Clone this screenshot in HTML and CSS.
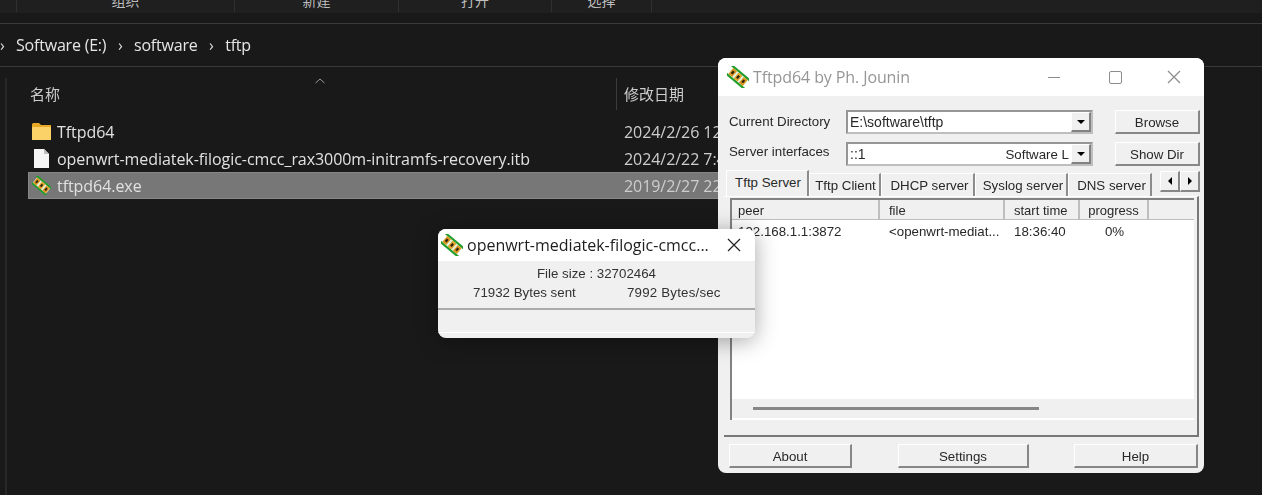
FILE: index.html
```html
<!DOCTYPE html>
<html>
    <head>
        <title>Tftpd64</title>

        <link rel="stylesheet" href="styles.css">
    </head>

    <body>
        <svg class="icon-defs" width="0" height="0">
            <symbol id="chip" viewBox="0 0 20 20">
                <g transform="rotate(40 10 10)">
                    <rect x="-2" y="4.5" width="24" height="2" fill="#1f9e2c"></rect>
                    <rect x="-2" y="13.5" width="24" height="2" fill="#1f9e2c"></rect>
                    <rect x="1" y="6.5" width="18" height="7" fill="#e6f3e0"></rect>
                    <rect x="1.5" y="6.5" width="4.5" height="7" fill="#d9951f"></rect>
                    <rect x="7.8" y="6.5" width="4.5" height="7" fill="#e0a32c"></rect>
                    <rect x="14" y="6.5" width="4.5" height="7" fill="#d9951f"></rect>
                    <rect x="2.7" y="8.5" width="2" height="3" fill="#2a2210"></rect>
                    <rect x="9" y="8.5" width="2" height="3" fill="#2a2210"></rect>
                    <rect x="15.2" y="8.5" width="2" height="3" fill="#2a2210"></rect>
                </g>
            </symbol>
        </svg>

        <div class="explorer">
            <div class="toolbar">
                <span class="tool tool-first">组织</span>
                <span class="tool tool-new">新建</span>
                <span class="tool tool-open">打开</span>
                <span class="tool tool-select">选择</span>
            </div>

            <div class="address-bar">
                <span class="crumb-sep first-sep">›</span>
                <span>Software (E:)</span>
                <span class="crumb-sep">›</span>
                <span>software</span>
                <span class="crumb-sep">›</span>
                <span>tftp</span>
            </div>

            <div class="file-area">
                <div class="column-head">
                    <span class="col-name">名称</span>
                    <svg class="sort-arrow" width="10" height="6" viewBox="0 0 10 6">
                        <path d="M0.5 5 L5 1 L9.5 5" fill="none" stroke="#9a9a9a" stroke-width="1"></path>
                    </svg>
                    <span class="col-date">修改日期</span>
                </div>

                <div class="file-row">
                    <svg class="file-icon" width="19" height="17" viewBox="0 0 19 17">
                        <path d="M0 1.5 Q0 0 1.5 0 H7 L9 2 H19 V17 H0 Z" fill="#e8a926"></path>
                        <rect x="0" y="4" width="19" height="13" rx="1" fill="#fbd268"></rect>
                    </svg>
                    <span class="file-name">Tftpd64</span>
                    <span class="file-date">2024/2/26 12:10</span>
                </div>
                <div class="file-row">
                    <svg class="file-icon" width="19" height="19" viewBox="0 0 19 19">
                        <path d="M2 0 H12 L17 5 V19 H2 Z" fill="#f5f5f5"></path>
                        <path d="M12 0 V5 H17 Z" fill="#bdbdbd"></path>
                    </svg>
                    <span class="file-name">openwrt-mediatek-filogic-cmcc_rax3000m-initramfs-recovery.itb</span>
                    <span class="file-date">2024/2/22 7:48</span>
                </div>
                <div class="file-row selected">
                    <svg class="file-icon" width="19" height="19"><use href="#chip"></use></svg>
                    <span class="file-name">tftpd64.exe</span>
                    <span class="file-date">2019/2/27 22:08</span>
                </div>
            </div>
        </div>

        <div class="tftp-window">
            <div class="title-bar">
                <svg class="title-icon" width="22" height="22"><use href="#chip"></use></svg>
                <span class="title-text">Tftpd64 by Ph. Jounin</span>
                <div class="win-controls">
                    <span class="ctl-min"></span>
                    <span class="ctl-max"></span>
                    <svg width="14" height="14" viewBox="0 0 14 14">
                        <path d="M1 1 L13 13 M13 1 L1 13" stroke="#8c8c8c" stroke-width="1.2"></path>
                    </svg>
                </div>
            </div>

            <div class="tftp-body">
                <div class="form-row">
                    <label class="form-label">Current Directory</label>
                    <div class="combo">
                        <span class="combo-text">E:\software\tftp</span>
                        <span class="combo-btn"><i class="arrow-down"></i></span>
                    </div>
                    <button class="bevel-button side-button">Browse</button>
                </div>
                <div class="form-row form-row-2">
                    <label class="form-label label-2">Server interfaces</label>
                    <div class="combo">
                        <span class="combo-text">::1</span>
                        <span class="combo-right">Software L</span>
                        <span class="combo-btn"><i class="arrow-down"></i></span>
                    </div>
                    <button class="bevel-button side-button">Show Dir</button>
                </div>

                <div class="tabs">
                    <span class="tab tab-active">Tftp Server</span>
                    <span class="tab tab-client">Tftp Client</span>
                    <span class="tab tab-dhcp">DHCP server</span>
                    <span class="tab tab-syslog">Syslog server</span>
                    <span class="tab tab-dns">DNS server</span>
                    <div class="tab-scroll">
                        <span class="tab-arrow"><i class="arrow-left"></i></span>
                        <span class="tab-arrow"><i class="arrow-right"></i></span>
                    </div>
                </div>

                <div class="tab-panel">
                    <div class="list">
                        <div class="list-head">
                            <span class="head-cell cell-peer">peer</span>
                            <span class="head-cell cell-file">file</span>
                            <span class="head-cell cell-start">start time</span>
                            <span class="head-cell cell-progress">progress</span>
                            <span class="head-cell head-rest"></span>
                        </div>
                        <div class="list-row">
                            <span class="cell-peer">192.168.1.1:3872</span>
                            <span class="cell-file">&lt;openwrt-mediat...</span>
                            <span class="cell-start">18:36:40</span>
                            <span class="cell-progress">0%</span>
                        </div>
                        <div class="list-scroll"><span class="scroll-thumb"></span></div>
                    </div>
                </div>

                <div class="bottom-buttons">
                    <button class="bevel-button about-button">About</button>
                    <button class="bevel-button settings-button">Settings</button>
                    <button class="bevel-button help-button">Help</button>
                </div>
            </div>
        </div>

        <div class="progress-dialog">
            <div class="dialog-title">
                <svg class="dialog-icon" width="22" height="22"><use href="#chip"></use></svg>
                <span class="dialog-name">openwrt-mediatek-filogic-cmcc...</span>
                <svg class="dialog-close" width="14" height="14" viewBox="0 0 14 14">
                    <path d="M1 1 L13 13 M13 1 L1 13" stroke="#222" stroke-width="1.2"></path>
                </svg>
            </div>
            <div class="dialog-info">
                <p class="size-line">File size : 32702464</p>
                <p class="rate-line"><span>71932 Bytes sent</span><span class="rate-speed">7992 Bytes/sec</span></p>
            </div>
            <div class="dialog-bar"></div>
        </div>
    </body>
</html>
```

FILE: styles.css
```css
html, body{
    margin:0;
    padding:0;
}
body{
    width:1262px;
    height:495px;
    overflow:hidden;
    background-color:rgb(25, 25, 25);
    position:relative;
}
.icon-defs{
    position:absolute;
}

/* explorer behind the windows */
.explorer{
    height:495px;
    display:flex;
    flex-direction:column;
    color:rgb(225, 225, 225);
    font-family:"Open Sans", "Noto Sans CJK SC", sans-serif;
    filter:blur(0.4px);
}
.toolbar{
    height:24px;
    box-sizing:border-box;
    border-bottom:1px solid rgb(58, 58, 58);
    display:flex;
    overflow:hidden;
    font-size:14px;
    color:rgb(190, 190, 190);
    background:linear-gradient(rgb(31, 31, 31) 13px, rgb(25, 25, 25) 13px);
}
.tool{
    height:12px;
    box-sizing:border-box;
    border-left:1px solid rgb(48, 48, 48);
    display:block;
    text-align:center;
    line-height:0;
    font-family:"Noto Sans CJK SC", sans-serif;
}
.tool-first{
    margin-left:16px;
    width:218px;
}
.tool-new{
    width:164px;
}
.tool-open{
    width:153px;
}
.tool-select{
    width:101px;
    border-right:1px solid rgb(48, 48, 48);
}
.address-bar{
    height:43px;
    box-sizing:border-box;
    border-bottom:1px solid rgb(58, 58, 58);
    display:flex;
    align-items:center;
    padding-left:16px;
    font-size:16px;
    letter-spacing:-0.2px;
    color:rgb(230, 230, 230);
}
.crumb-sep{
    margin:0 11.5px;
    color:rgb(220, 220, 220);
}
.first-sep{
    margin:0 8px 0 -16px;
    width:8px;
}
.file-area{
    flex:1;
    margin-left:5px;
    border-left:2px solid rgb(40, 40, 40);
    margin-top:11px;
}
.column-head{
    height:32px;
    position:relative;
    font-family:"Noto Sans CJK SC", sans-serif;
    font-size:15px;
    line-height:32px;
    color:rgb(205, 205, 205);
    margin-bottom:8px;
}
.col-name{
    position:absolute;
    left:23px;
}
.sort-arrow{
    position:absolute;
    left:308px;
    top:0;
}
.col-date{
    position:absolute;
    left:609px;
    padding-left:7px;
    border-left:1px solid rgb(60, 60, 60);
}
.file-row{
    height:27px;
    margin-left:21px;
    display:flex;
    align-items:center;
    font-size:16px;
    letter-spacing:-0.06px;
}
.file-icon{
    margin-left:4px;
    width:19px;
    flex:none;
}
.file-name{
    margin-left:6px;
    width:567px;
    flex:none;
    white-space:nowrap;
}
.file-date{
    color:rgb(205, 205, 205);
    white-space:nowrap;
    width:94px;
    overflow:hidden;
}
.selected{
    background-color:rgb(119, 119, 119);
    border:1px solid rgb(135, 135, 135);
    box-sizing:border-box;
    margin-right:500px;
}
.selected .file-icon{
    margin-left:3px;
}

/* tftpd64 main window */
.tftp-window{
    position:absolute;
    left:718px;
    top:58px;
    width:486px;
    height:415px;
    border-radius:8px;
    overflow:hidden;
    background-color:rgb(240, 240, 240);
    font-family:"Liberation Sans", sans-serif;
    font-size:13.3px;
    color:rgb(40, 40, 40);
    filter:blur(0.4px);
}
.title-bar{
    height:38px;
    background-color:white;
    display:flex;
    align-items:center;
    padding-left:9px;
}
.title-text{
    margin-left:4px;
    font-family:"Open Sans", sans-serif;
    font-size:16px;
    letter-spacing:-0.1px;
    color:rgb(150, 150, 150);
    flex:1;
}
.win-controls{
    display:flex;
    align-items:center;
}
.ctl-min{
    width:12px;
    height:1px;
    background-color:rgb(140, 140, 140);
    margin-right:49px;
}
.ctl-max{
    width:11px;
    height:11px;
    border:1px solid rgb(140, 140, 140);
    border-radius:2px;
    margin-right:45px;
}
.win-controls svg{
    margin-right:23px;
}
.tftp-body{
    padding:14px 4px 0 6px;
    box-sizing:border-box;
    height:377px;
    display:flex;
    flex-direction:column;
}
.form-row{
    display:flex;
    align-items:center;
    height:24px;
}
.form-row-2{
    margin-top:8px;
}
.form-label{
    width:122px;
    flex:none;
    padding-left:5px;
    box-sizing:border-box;
    position:relative;
    top:-1px;
}
.label-2{
    top:-3px;
}
.combo{
    width:247px;
    height:24px;
    box-sizing:border-box;
    border:2px solid rgb(150, 150, 150);
    border-right-color:rgb(190, 190, 190);
    border-bottom-color:rgb(190, 190, 190);
    background-color:white;
    display:flex;
    align-items:center;
    padding-left:2px;
    font-size:14px;
}
.combo-text{
    flex:1;
}
.combo-right{
    margin-right:2px;
    font-size:13.3px;
}
.combo-btn{
    width:20px;
    height:20px;
    box-sizing:border-box;
    background-color:rgb(240, 240, 240);
    border-right:2px solid rgb(130, 130, 130);
    border-bottom:2px solid rgb(130, 130, 130);
    border-left:1px solid white;
    border-top:1px solid white;
    display:flex;
    align-items:center;
    justify-content:center;
}
.arrow-down{
    border-left:4px solid transparent;
    border-right:4px solid transparent;
    border-top:4px solid black;
}
.arrow-left{
    border-top:4px solid transparent;
    border-bottom:4px solid transparent;
    border-right:4px solid black;
}
.arrow-right{
    border-top:4px solid transparent;
    border-bottom:4px solid transparent;
    border-left:4px solid black;
}
.bevel-button{
    height:24px;
    box-sizing:border-box;
    background-color:rgb(240, 240, 240);
    border:1px solid white;
    border-right:2px solid rgb(135, 135, 135);
    border-bottom:2px solid rgb(135, 135, 135);
    font-family:"Liberation Sans", sans-serif;
    font-size:13.3px;
    color:rgb(40, 40, 40);
    padding:1px 0 0 0;
}
.side-button{
    width:85px;
    margin-left:22px;
}
.tabs{
    display:flex;
    height:26px;
    margin-top:4px;
    margin-left:2px;
    position:relative;
    align-items:flex-end;
}
.tab{
    height:23px;
    box-sizing:border-box;
    border-top:1px solid white;
    border-left:1px solid white;
    border-right:2px solid rgb(140, 140, 140);
    text-align:center;
    line-height:24px;
    white-space:nowrap;
}
.tab-active{
    width:83px;
    height:26px;
    line-height:24px;
    padding-left:2px;
    background-color:rgb(240, 240, 240);
    position:relative;
    z-index:1;
}
.tab-client{
    width:72px;
    padding-left:2px;
}
.tab-dhcp{
    width:94px;
    padding-left:4px;
}
.tab-syslog{
    width:93px;
    padding-left:4px;
}
.tab-dns{
    width:84px;
    padding-left:4px;
}
.tab-scroll{
    position:absolute;
    left:434px;
    top:1px;
    display:flex;
}
.tab-arrow{
    width:20px;
    height:21px;
    box-sizing:border-box;
    border-top:1px solid white;
    border-left:1px solid white;
    border-right:2px solid rgb(135, 135, 135);
    border-bottom:2px solid rgb(135, 135, 135);
    display:flex;
    align-items:center;
    justify-content:center;
}
.tab-panel{
    height:241px;
    box-sizing:border-box;
    border-top:1px solid white;
    border-right:2px solid rgb(120, 120, 120);
    border-bottom:2px solid rgb(120, 120, 120);
    padding:1px 3px 0 6px;
    margin-right:1px;
}
.list{
    border-left:2px solid rgb(130, 130, 130);
    border-top:2px solid rgb(130, 130, 130);
    height:220px;
    background-color:white;
    display:flex;
    flex-direction:column;
}
.list-head{
    height:20px;
    display:flex;
    background-color:rgb(240, 240, 240);
    font-size:13px;
    line-height:22px;
}
.head-cell{
    box-sizing:border-box;
    border-right:2px solid rgb(190, 190, 190);
    border-bottom:1px solid rgb(190, 190, 190);
}
.head-rest{
    flex:1;
    border-right:none;
}
.list-row{
    display:flex;
    height:179px;
    line-height:24px;
    white-space:nowrap;
}
.cell-peer{
    width:148px;
    padding-left:6px;
    box-sizing:border-box;
    flex:none;
}
.cell-file{
    width:125px;
    padding-left:9px;
    box-sizing:border-box;
    flex:none;
}
.cell-start{
    width:75px;
    padding-left:9px;
    box-sizing:border-box;
    flex:none;
}
.cell-progress{
    width:69px;
    text-align:center;
    box-sizing:border-box;
    flex:none;
}
.list-scroll{
    height:19px;
    background-color:rgb(240, 240, 240);
    padding:8px 0 0 21px;
    box-sizing:border-box;
}
.scroll-thumb{
    display:block;
    width:286px;
    height:3px;
    background-color:rgb(135, 135, 135);
}
.bottom-buttons{
    display:flex;
    margin-top:7px;
    padding-left:5px;
}
.about-button{
    width:123px;
}
.settings-button{
    width:131px;
    margin-left:46px;
}
.help-button{
    width:124px;
    margin-left:45px;
}

/* transfer progress popup */
.progress-dialog{
    position:absolute;
    left:438px;
    top:229px;
    width:317px;
    height:109px;
    border-radius:8px;
    overflow:hidden;
    background-color:rgb(240, 240, 240);
    box-shadow:0 3px 22px rgba(0, 0, 0, 0.35);
    font-family:"Liberation Sans", sans-serif;
    font-size:13.3px;
    color:rgb(50, 50, 50);
}
.dialog-title{
    height:32px;
    background-color:white;
    display:flex;
    align-items:center;
    padding-left:3px;
}
.dialog-name{
    margin-left:4px;
    font-family:"Open Sans", sans-serif;
    font-size:16px;
    color:rgb(30, 30, 30);
    width:260px;
    white-space:nowrap;
}
.dialog-info{
    height:49px;
    border-bottom:2px solid rgb(170, 170, 170);
    box-sizing:border-box;
}
.size-line{
    margin:0;
    padding-top:5px;
    text-align:center;
    line-height:16px;
}
.rate-line{
    margin:3px 0 0 35px;
    line-height:16px;
    display:flex;
}
.rate-line span:first-child{
    width:154px;
}
.rate-speed{
    letter-spacing:0.2px;
}
.dialog-bar{
    height:22px;
    border-bottom:1px solid white;
}
```
